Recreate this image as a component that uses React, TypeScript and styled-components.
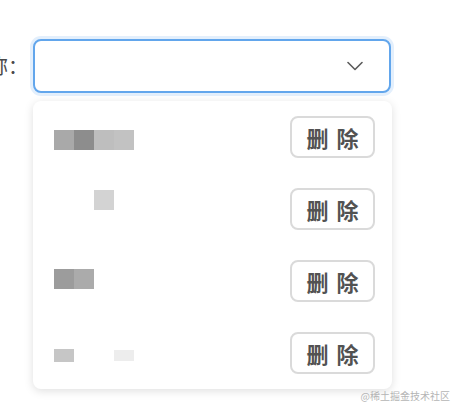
import React from "react";
import styled, { createGlobalStyle } from "styled-components";

const Global = createGlobalStyle`
  html, body { margin: 0; padding: 0; background: #fff; }
  body { font-family: "Noto Sans CJK SC", "Noto Sans", sans-serif; }
`;

const Page = styled.div`
  position: relative;
  width: 460px;
  height: 412px;
  padding-top: 39px;
  box-sizing: border-box;
  overflow: hidden;
`;

const FieldRow = styled.div`
  display: flex;
  align-items: center;
  gap: 5px;
`;

const Label = styled.div`
  width: 28px;
  display: flex;
  justify-content: flex-end;
  overflow: hidden;
  white-space: nowrap;
  font-size: 20px;
  color: #4a4a4a;
  line-height: 54px;
`;

const SelectBox = styled.div`
  width: 358px;
  height: 54px;
  box-sizing: border-box;
  border: 2px solid #62a6ec;
  border-radius: 8px;
  box-shadow: 0 0 0 3px rgba(98, 166, 236, 0.18);
  display: flex;
  align-items: center;
  justify-content: flex-end;
  padding-right: 26px;
  background: #fff;
`;

const Dropdown = styled.div`
  margin: 8px 0 0 33px;
  width: 359px;
  box-sizing: border-box;
  background: #fff;
  border-radius: 8px;
  box-shadow: 0 2px 10px rgba(0, 0, 0, 0.13);
  padding: 0 17px 0 21px;
`;

const Item = styled.div`
  height: 72px;
  display: flex;
  align-items: center;
  justify-content: space-between;
`;

const Mosaic = styled.div`
  width: 80px;
  height: 20px;
  display: flex;
  align-self: flex-start;
`;

const Cell = styled.div<{ $c: string; $top: number; $h: number }>`
  width: 20px;
  height: ${(p) => p.$h}px;
  margin-top: ${(p) => p.$top}px;
  background: ${(p) => p.$c};
`;

const DeleteButton = styled.button`
  width: 85px;
  height: 42px;
  box-sizing: border-box;
  border: 2px solid #dadada;
  border-radius: 8px;
  background: #fff;
  font-family: "Noto Sans CJK SC", sans-serif;
  font-size: 22px;
  font-weight: 700;
  color: #525252;
  padding: 0;
  display: flex;
  align-items: center;
  justify-content: center;
  gap: 8px;
`;

const Watermark = styled.div`
  position: absolute;
  right: 10px;
  bottom: 9px;
  font-size: 10px;
  color: #b5b5b5;
  white-space: nowrap;
`;

type Row = { cells: { c: string; top: number; h: number }[] };

const rows: Row[] = [
  {
    cells: [
      { c: "#a9a9a9", top: 29, h: 20 },
      { c: "#8d8d8d", top: 29, h: 20 },
      { c: "#bebebe", top: 29, h: 20 },
      { c: "#c2c2c2", top: 29, h: 20 },
    ],
  },
  {
    cells: [
      { c: "transparent", top: 17, h: 20 },
      { c: "transparent", top: 17, h: 20 },
      { c: "#d3d3d3", top: 17, h: 20 },
      { c: "transparent", top: 17, h: 20 },
    ],
  },
  {
    cells: [
      { c: "#9c9c9c", top: 24, h: 20 },
      { c: "#ababab", top: 24, h: 20 },
      { c: "transparent", top: 24, h: 20 },
      { c: "transparent", top: 24, h: 20 },
    ],
  },
  {
    cells: [
      { c: "#c6c6c6", top: 32, h: 13 },
      { c: "transparent", top: 32, h: 13 },
      { c: "transparent", top: 32, h: 13 },
      { c: "#ededed", top: 33, h: 11 },
    ],
  },
];

const Chevron = () => (
  <svg width="16" height="10" viewBox="0 0 16 10" fill="none">
    <path d="M1 1.5 L8 8.5 L15 1.5" stroke="#5c5c5c" strokeWidth="1.6" strokeLinecap="round" strokeLinejoin="round" />
  </svg>
);

export default function App() {
  return (
    <>
      <Global />
      <Page>
        <FieldRow>
          <Label>名称：</Label>
          <SelectBox>
            <Chevron />
          </SelectBox>
        </FieldRow>
        <Dropdown>
          {rows.map((r, i) => (
            <Item key={i}>
              <Mosaic>
                {r.cells.map((c, j) => (
                  <Cell key={j} $c={c.c} $top={c.top} $h={c.h} />
                ))}
              </Mosaic>
              <DeleteButton>
                <span>删</span>
                <span>除</span>
              </DeleteButton>
            </Item>
          ))}
        </Dropdown>
        <Watermark>@稀土掘金技术社区</Watermark>
      </Page>
    </>
  );
}
